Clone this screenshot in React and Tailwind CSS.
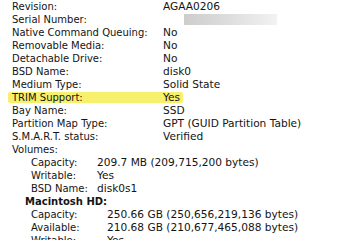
const top = [
  ['Revision:', 'AGAA0206'],
  ['Serial Number:', null],
  ['Native Command Queuing:', 'No'],
  ['Removable Media:', 'No'],
  ['Detachable Drive:', 'No'],
  ['BSD Name:', 'disk0'],
  ['Medium Type:', 'Solid State'],
  ['TRIM Support:', 'Yes', true],
  ['Bay Name:', 'SSD'],
  ['Partition Map Type:', 'GPT (GUID Partition Table)'],
  ['S.M.A.R.T. status:', 'Verified'],
];

const efiVolume = [
  ['Capacity:', '209.7 MB (209,715,200 bytes)'],
  ['Writable:', 'Yes'],
  ['BSD Name:', 'disk0s1'],
];

const macVolume = [
  ['Capacity:', '250.66 GB (250,656,219,136 bytes)'],
  ['Available:', '210.68 GB (210,677,465,088 bytes)'],
  ['Writable:', 'Yes'],
];

function Row({ label, value, highlight }) {
  if (highlight) {
    return (
      <div className="flex h-[11px] my-[1px] ml-[8px] w-[175px] pl-[4px] leading-[11px] bg-[#f6f06c] rounded-[2px]">
        <span className="w-[151px] shrink-0">{label}</span>
        <span className="text-[10.6px]">{value}</span>
      </div>
    );
  }
  return (
    <div className="flex h-[13px] pl-[12px] leading-[13px]">
      <span className="w-[151px] shrink-0">{label}</span>
      {value === null ? (
        <span className="ml-[21px] mt-[1px] w-[93px] h-[11px] bg-gradient-to-r from-[#cdcdcd] via-[#dedede] to-[#f2f2f2]" />
      ) : (
        <span className="text-[10.6px]">{value}</span>
      )}
    </div>
  );
}

export default function App() {
  return (
    <div
      className="w-[358px] h-[240px] overflow-hidden bg-white text-[10px] text-[#141414]"
      style={{ fontFamily: '"DejaVu Sans", "Lucida Grande", sans-serif' }}
    >
      {top.map(([label, value, hl]) => (
        <Row key={label} label={label} value={value} highlight={hl} />
      ))}
      <div className="h-[13px] pl-[12px] leading-[13px]">Volumes:</div>
      {efiVolume.map(([label, value]) => (
        <div key={label} className="flex h-[13px] pl-[31px] leading-[13px]">
          <span className="w-[66px] shrink-0">{label}</span>
          <span className="text-[10.6px]">{value}</span>
        </div>
      ))}
      <div className="h-[13px] pl-[25px] leading-[13px] font-bold">Macintosh HD:</div>
      {macVolume.map(([label, value]) => (
        <div key={label} className="flex h-[13px] pl-[31px] leading-[13px]">
          <span className="w-[76px] shrink-0">{label}</span>
          <span className="text-[10.6px]">{value}</span>
        </div>
      ))}
    </div>
  );
}
